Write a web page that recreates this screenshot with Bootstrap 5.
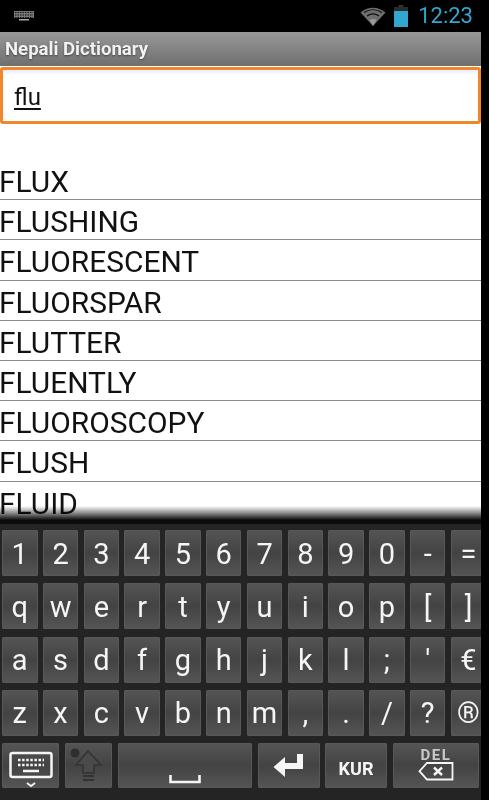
<!DOCTYPE html>
<html lang="en">
<head>
  <meta charset="UTF-8" />
  <meta name="viewport" content="width=device-width, initial-scale=1.0">
  <title>Nepali Dictionary</title>
  <link href="https://cdn.jsdelivr.net/npm/bootstrap@5.3.2/dist/css/bootstrap.min.css" rel="stylesheet">
  <style>
    html, body { height: 800px; overflow: hidden; background: #000; }
    body { font-family: Roboto, "Liberation Sans", sans-serif; }
    .screen { width: 481px; height: 800px; overflow: hidden; background: #fff; filter: blur(0.4px); }
    .status-bar { height: 32px; background: #000; padding: 0 8px 0 14px; }
    .status-time { color: #33a5d1; font-size: 22px; line-height: 1; margin-left: 10px; }
    .title-bar { height: 34px; padding-left: 5px; background: linear-gradient(#989898, #6f6f6f); color: #f2f2f2; font-size: 18.6px; font-weight: 700; line-height: 34px; text-shadow: 0 1px 2px #444; }
    .search-wrap { height: 60px; padding: 1px 0 2px; background: #fff; }
    .search-box { height: 57px; border: 3px solid #f0882a; border-radius: 3px; padding: 0 11px; font-size: 24px; line-height: 54px; color: #111; box-shadow: inset 0 3px 3px #eef; }
    .search-box span { text-decoration: underline; text-underline-offset: 3px; text-decoration-thickness: 2px; }
    .word-area { height: 394px; padding-top: 34px; position: relative; overflow: hidden; }
    .word-row { height: 40.2px; line-height: 43px; font-size: 29.9px; color: #111; border-bottom: 1px solid #8c8c8c; white-space: nowrap; text-indent: -1px; }
    .word-row:last-child { border-bottom: 0; }
    .word-fade { position: absolute; left: 0; right: 0; bottom: 0; height: 14px; background: linear-gradient(#fff, #8a8a8a 50%, #0c0c0c); mix-blend-mode: multiply; }
    .kbd { height: 280px; background: #242424; padding: 6px 0 0 2px; overflow: hidden; border-top: 4px solid #0c0c0c; }
    .key-row { display: grid; grid-template-columns: repeat(12, 35.5px); column-gap: 5.3px; height: 46px; margin-bottom: 7.3px; }
    .soft-key { background: linear-gradient(#555, #434343 50%, #555); border-radius: 2px; box-shadow: inset 0 0 0 1px #585858; color: #f5f5f5; font-size: 29px; line-height: 1; padding-top: 2px; }
    .bottom-row { display: flex; height: 45px; }
    .k-board { width: 57px; margin-right: 6px; padding-top: 0; }
    .k-shift { width: 47px; margin-right: 6px; padding-top: 0; }
    .k-space { width: 134px; margin-right: 6px; }
    .k-enter { width: 62px; margin-right: 5px; padding-top: 0; }
    .k-lang { width: 62px; margin-right: 6px; font-size: 18px; font-weight: 700; padding-top: 6px; }
    .k-del { width: 86px; font-size: 15px; font-weight: 700; color: #c8c8c8; letter-spacing: 1.5px; padding-top: 0; }
    .k-del div { line-height: 14px; margin-top: 5px; }
  </style>
</head>
<body>
  <div class="screen">
    <div class="status-bar d-flex align-items-center">
      <svg width="20" height="12" viewBox="0 0 20 12" class="me-auto">
        <rect x="0" y="1" width="20" height="7" fill="#777"/>
        <path d="M1 2.5h18M1 5h18M1 7.5h18" stroke="#111" stroke-width="1" stroke-dasharray="1.5 1"/>
        <rect x="5" y="9" width="10" height="1.5" fill="#aaa"/>
      </svg>
      <svg width="26" height="22" viewBox="0 0 26 22">
        <path d="M13 21 0.5 7.5C7.5 1 18.5 1 25.5 7.5Z" fill="#6e6e6e"/>
        <path d="M4 7.5C9.5 3.8 16.5 3.8 22 7.5M7 11C11 8.3 15 8.3 19 11" stroke="#111" stroke-width="1.2" fill="none"/>
        <path d="M13 21 9.5 15C11.5 13.7 14.5 13.7 16.5 15Z" fill="#999"/>
      </svg>
      <svg width="14" height="22" viewBox="0 0 14 22" class="ms-2">
        <path d="M4.5 0h5v2h-5z" fill="#333"/>
        <rect x="0" y="2" width="14" height="4" fill="#2b2b2b"/>
        <rect x="0" y="6" width="14" height="16" fill="#33a5d1"/>
      </svg>
      <span class="status-time">12:23</span>
    </div>
    <div class="title-bar">Nepali Dictionary</div>
    <div class="search-wrap">
      <div class="search-box"><span>flu</span></div>
    </div>
    <div class="word-area">
      <div class="word-row">FLUX</div>
      <div class="word-row">FLUSHING</div>
      <div class="word-row">FLUORESCENT</div>
      <div class="word-row">FLUORSPAR</div>
      <div class="word-row">FLUTTER</div>
      <div class="word-row">FLUENTLY</div>
      <div class="word-row">FLUOROSCOPY</div>
      <div class="word-row">FLUSH</div>
      <div class="word-row">FLUID</div>
      <div class="word-fade"></div>
    </div>
    <div class="kbd">
      <div class="key-row">
        <div class="soft-key d-flex align-items-center justify-content-center">1</div>
        <div class="soft-key d-flex align-items-center justify-content-center">2</div>
        <div class="soft-key d-flex align-items-center justify-content-center">3</div>
        <div class="soft-key d-flex align-items-center justify-content-center">4</div>
        <div class="soft-key d-flex align-items-center justify-content-center">5</div>
        <div class="soft-key d-flex align-items-center justify-content-center">6</div>
        <div class="soft-key d-flex align-items-center justify-content-center">7</div>
        <div class="soft-key d-flex align-items-center justify-content-center">8</div>
        <div class="soft-key d-flex align-items-center justify-content-center">9</div>
        <div class="soft-key d-flex align-items-center justify-content-center">0</div>
        <div class="soft-key d-flex align-items-center justify-content-center">-</div>
        <div class="soft-key d-flex align-items-center justify-content-center">=</div>
      </div>
      <div class="key-row">
        <div class="soft-key d-flex align-items-center justify-content-center">q</div>
        <div class="soft-key d-flex align-items-center justify-content-center">w</div>
        <div class="soft-key d-flex align-items-center justify-content-center">e</div>
        <div class="soft-key d-flex align-items-center justify-content-center">r</div>
        <div class="soft-key d-flex align-items-center justify-content-center">t</div>
        <div class="soft-key d-flex align-items-center justify-content-center">y</div>
        <div class="soft-key d-flex align-items-center justify-content-center">u</div>
        <div class="soft-key d-flex align-items-center justify-content-center">i</div>
        <div class="soft-key d-flex align-items-center justify-content-center">o</div>
        <div class="soft-key d-flex align-items-center justify-content-center">p</div>
        <div class="soft-key d-flex align-items-center justify-content-center">[</div>
        <div class="soft-key d-flex align-items-center justify-content-center">]</div>
      </div>
      <div class="key-row">
        <div class="soft-key d-flex align-items-center justify-content-center">a</div>
        <div class="soft-key d-flex align-items-center justify-content-center">s</div>
        <div class="soft-key d-flex align-items-center justify-content-center">d</div>
        <div class="soft-key d-flex align-items-center justify-content-center">f</div>
        <div class="soft-key d-flex align-items-center justify-content-center">g</div>
        <div class="soft-key d-flex align-items-center justify-content-center">h</div>
        <div class="soft-key d-flex align-items-center justify-content-center">j</div>
        <div class="soft-key d-flex align-items-center justify-content-center">k</div>
        <div class="soft-key d-flex align-items-center justify-content-center">l</div>
        <div class="soft-key d-flex align-items-center justify-content-center">;</div>
        <div class="soft-key d-flex align-items-center justify-content-center">'</div>
        <div class="soft-key d-flex align-items-center justify-content-center">€</div>
      </div>
      <div class="key-row">
        <div class="soft-key d-flex align-items-center justify-content-center">z</div>
        <div class="soft-key d-flex align-items-center justify-content-center">x</div>
        <div class="soft-key d-flex align-items-center justify-content-center">c</div>
        <div class="soft-key d-flex align-items-center justify-content-center">v</div>
        <div class="soft-key d-flex align-items-center justify-content-center">b</div>
        <div class="soft-key d-flex align-items-center justify-content-center">n</div>
        <div class="soft-key d-flex align-items-center justify-content-center">m</div>
        <div class="soft-key d-flex align-items-center justify-content-center">,</div>
        <div class="soft-key d-flex align-items-center justify-content-center">.</div>
        <div class="soft-key d-flex align-items-center justify-content-center">/</div>
        <div class="soft-key d-flex align-items-center justify-content-center">?</div>
        <div class="soft-key d-flex align-items-center justify-content-center">®</div>
      </div>
      <div class="bottom-row">
        <div class="soft-key k-board d-flex flex-column align-items-center">
          <svg width="44" height="45" viewBox="0 0 44 45">
            <rect x="1.5" y="10" width="41" height="24" rx="2" fill="none" stroke="#f5f5f5" stroke-width="2.5"/>
            <path d="M9 17h26M9 22h26" stroke="#f5f5f5" stroke-width="2.5" stroke-dasharray="2.5 1.6"/>
            <path d="M14 28h16" stroke="#f5f5f5" stroke-width="2.5"/>
            <path d="M18 40l4 3 4-3" stroke="#f5f5f5" stroke-width="1.8" fill="none"/>
          </svg>
        </div>
        <div class="soft-key k-shift d-flex justify-content-center">
          <svg width="47" height="45" viewBox="0 0 47 45">
            <circle cx="10" cy="10" r="4.5" fill="#2f2f2f"/>
            <path d="M23 8 36 22H29V30H18V22H11Z" fill="#4a4a4a" stroke="#333" stroke-width="1.5"/>
            <path d="M18 33h11M18 37h11" stroke="#333" stroke-width="2"/>
          </svg>
        </div>
        <div class="soft-key k-space d-flex justify-content-center align-items-end">
          <svg width="32" height="9" viewBox="0 0 32 9" class="mb-1">
            <path d="M1.5 0V7H30.5V0" stroke="#f5f5f5" stroke-width="2.6" fill="none"/>
          </svg>
        </div>
        <div class="soft-key k-enter d-flex align-items-center justify-content-center">
          <svg width="32" height="26" viewBox="0 0 32 26">
            <path d="M27 1V13H12" stroke="#f5f5f5" stroke-width="6" fill="none"/>
            <path d="M0.5 14 12 4V24Z" fill="#f5f5f5"/>
          </svg>
        </div>
        <div class="soft-key k-lang d-flex align-items-center justify-content-center">KUR</div>
        <div class="soft-key k-del d-flex flex-column align-items-center">
          <div>DEL</div>
          <svg width="36" height="19" viewBox="0 0 36 19">
            <path d="M9 1H34.5V17.5H9L1.5 9.2Z" fill="none" stroke="#f5f5f5" stroke-width="1.8"/>
            <path d="M16 5.5 24 13M24 5.5 16 13" stroke="#f5f5f5" stroke-width="2.4"/>
          </svg>
        </div>
      </div>
    </div>
  </div>
  <script src="https://cdn.jsdelivr.net/npm/bootstrap@5.3.2/dist/js/bootstrap.bundle.min.js"></script>
</body>
</html>
